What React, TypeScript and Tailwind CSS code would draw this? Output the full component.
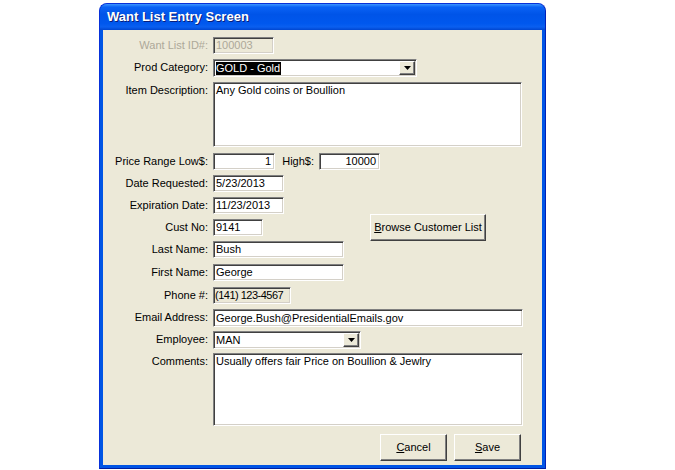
import React from "react";

const sunken =
  "border border-t-[#808080] border-l-[#808080] border-r-white border-b-white shadow-[inset_1px_1px_0_#404040,inset_-1px_-1px_0_#d4d0c8]";
const raised =
  "border border-t-white border-l-white border-r-[#404040] border-b-[#404040] shadow-[inset_-1px_-1px_0_#808080] bg-[#ECE9D8]";

function Label({ children, disabled }: { children: React.ReactNode; disabled?: boolean }) {
  return (
    <div
      className={
        "w-[106px] shrink-0 text-right pr-[1px] leading-[17px] whitespace-nowrap " +
        (disabled ? "text-[#ACA899]" : "text-black")
      }
    >
      {children}
    </div>
  );
}

function Arrow() {
  return (
    <div className={"w-[16px] h-full flex items-center justify-center " + raised}>
      <svg width="7" height="4" viewBox="0 0 7 4">
        <path d="M0 0H7L3.5 4Z" fill="#000" />
      </svg>
    </div>
  );
}

export default function App() {
  return (
    <div className="w-[675px] h-[470px] bg-white font-['Liberation_Sans',Arial,sans-serif] text-[11px] text-black overflow-hidden">
      <div className="ml-[99px] mt-[3px] w-[447px] h-[466px] flex flex-col rounded-t-[8px] bg-[#0055E5] border border-[#0831D9] border-b-[#001EA0] border-r-[#0020B8]">
        <div className="h-[26px] shrink-0 rounded-t-[7px] bg-[linear-gradient(to_bottom,#3C95FF_0%,#0A62F5_12%,#0054E8_40%,#0058EE_75%,#0A5FF0_88%,#0046D0_100%)] flex items-center pl-[7px]">
          <span className="text-white font-bold text-[13px] [text-shadow:1px_1px_0_#0A1E7A]">
            Want List Entry Screen
          </span>
        </div>
        <div className="flex-1 mx-[3px] mb-[3px] bg-[#ECE9D8] flex flex-col pt-[7px] whitespace-nowrap">
          <div className="flex h-[17px] items-stretch gap-[4px]">
            <Label disabled>Want List ID#:</Label>
            <div className={"w-[61px] px-[2px] leading-[15px] text-[#ACA899] bg-[#ECE9D8] " + sunken}>100003</div>
          </div>
          <div className="flex h-[18px] items-stretch gap-[4px] mt-[5px]">
            <Label>Prod Category:</Label>
            <div className={"w-[204px] bg-white flex items-stretch p-[1px] " + sunken}>
              <div className="flex-1 flex items-center pl-[1px]">
                <span className="bg-black text-white leading-[13px] pr-[1px]">GOLD - Gold</span>
              </div>
              <Arrow />
            </div>
          </div>
          <div className="flex h-[65px] items-stretch gap-[4px] mt-[5px]">
            <Label>Item Description:</Label>
            <div className={"w-[309px] bg-white px-[2px] pt-[1px] leading-[13px] " + sunken}>
              Any Gold coins or Boullion
            </div>
          </div>
          <div className="flex h-[17px] items-stretch gap-[4px] mt-[6px]">
            <Label>Price Range Low$:</Label>
            <div className={"w-[62px] bg-white px-[3px] leading-[15px] text-right " + sunken}>1</div>
            <div className="w-[36px] text-right pr-[1px] leading-[17px]">High$:</div>
            <div className={"w-[61px] bg-white px-[3px] leading-[15px] text-right " + sunken}>10000</div>
          </div>
          <div className="flex h-[17px] items-stretch gap-[4px] mt-[5px]">
            <Label>Date Requested:</Label>
            <div className={"w-[71px] bg-white px-[2px] leading-[15px] " + sunken}>5/23/2013</div>
          </div>
          <div className="flex h-[17px] items-stretch gap-[4px] mt-[5px]">
            <Label>Expiration Date:</Label>
            <div className={"w-[71px] bg-white px-[2px] leading-[15px] " + sunken}>11/23/2013</div>
          </div>
          <div className="flex h-[17px] items-stretch gap-[4px] mt-[5px]">
            <Label>Cust No:</Label>
            <div className={"w-[50px] bg-white px-[2px] leading-[15px] " + sunken}>9141</div>
            <div className="ml-[103px] -mt-[5px] -mb-[5px]">
              <div className={"w-[116px] h-[27px] flex items-center justify-center " + raised}>
                <span>
                  <span className="underline">B</span>rowse Customer List
                </span>
              </div>
            </div>
          </div>
          <div className="flex h-[17px] items-stretch gap-[4px] mt-[5px]">
            <Label>Last Name:</Label>
            <div className={"w-[131px] bg-white px-[2px] leading-[15px] " + sunken}>Bush</div>
          </div>
          <div className="flex h-[17px] items-stretch gap-[4px] mt-[6px]">
            <Label>First Name:</Label>
            <div className={"w-[131px] bg-white px-[2px] leading-[15px] " + sunken}>George</div>
          </div>
          <div className="flex h-[17px] items-stretch gap-[4px] mt-[6px]">
            <Label>Phone #:</Label>
            <div className={"w-[78px] bg-[#ECE9D8] pl-[1px] leading-[15px] overflow-hidden tracking-[-0.5px] " + sunken}>
              (141) 123-4567
            </div>
          </div>
          <div className="flex h-[18px] items-stretch gap-[4px] mt-[5px]">
            <Label>Email Address:</Label>
            <div className={"w-[310px] bg-white px-[2px] leading-[16px] " + sunken}>
              George.Bush@PresidentialEmails.gov
            </div>
          </div>
          <div className="flex h-[18px] items-stretch gap-[4px] mt-[4px]">
            <Label>Employee:</Label>
            <div className={"w-[148px] bg-white flex items-stretch p-[1px] " + sunken}>
              <div className="flex-1 leading-[14px] pl-[1px]">MAN</div>
              <Arrow />
            </div>
          </div>
          <div className="flex h-[73px] items-stretch gap-[4px] mt-[4px]">
            <Label>Comments:</Label>
            <div className={"w-[310px] bg-white px-[2px] pt-[1px] leading-[13px] " + sunken}>
              Usually offers fair Price on Boullion &amp; Jewlry
            </div>
          </div>
          <div className="flex gap-[7px] mt-[8px] pl-[277px]">
            <div className={"w-[67px] h-[27px] flex items-center justify-center " + raised}>
              <span>
                <span className="underline">C</span>ancel
              </span>
            </div>
            <div className={"w-[67px] h-[27px] flex items-center justify-center " + raised}>
              <span>
                <span className="underline">S</span>ave
              </span>
            </div>
          </div>
        </div>
      </div>
    </div>
  );
}
